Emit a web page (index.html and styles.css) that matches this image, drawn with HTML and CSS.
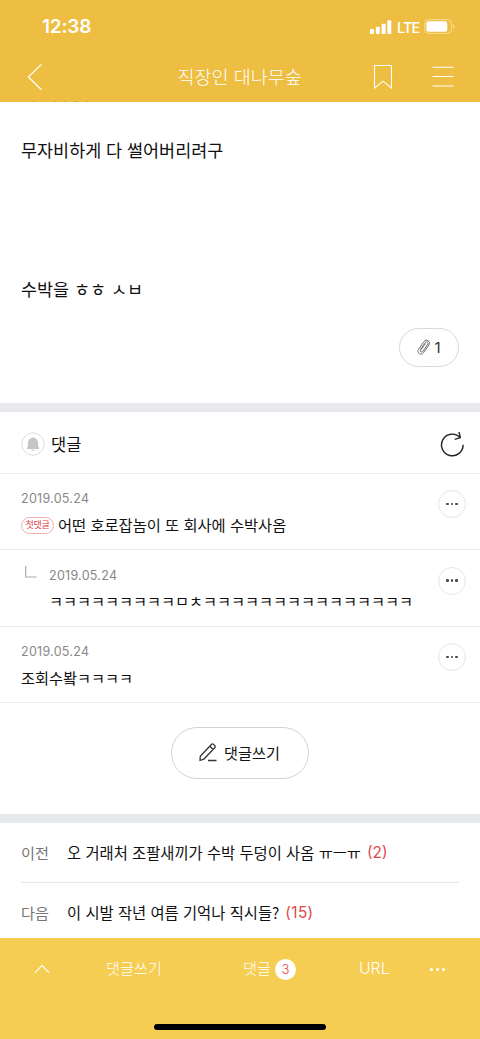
FILE: index.html
```html
<!DOCTYPE html>
<html lang="ko">
<head>
<meta charset="utf-8">
<title>직장인 대나무숲</title>
<link rel="stylesheet" href="styles.css">
</head>
<body>
<div class="app">
  <header class="top">
    <div class="status">
      <span class="clock">12:38</span>
      <div class="signals">
        <svg width="22" height="14" viewBox="0 0 22 14" fill="#fff"><rect x="0" y="9" width="4" height="5" rx="1"/><rect x="5.8" y="6.7" width="4" height="7.3" rx="1"/><rect x="11.6" y="3.8" width="4" height="10.2" rx="1"/><rect x="17.3" y="0.2" width="4" height="13.8" rx="1"/></svg>
        <span class="lte">LTE</span>
        <svg width="31" height="15" viewBox="0 0 31 15"><rect x=".6" y=".6" width="27" height="13.8" rx="4" fill="none" stroke="#f7dc94"/><rect x="2.3" y="2.3" width="21" height="10.4" rx="2.2" fill="#fff"/><path d="M29.2 5.2q1.4.8 1.4 2.3t-1.4 2.3z" fill="#f7dc94"/></svg>
      </div>
    </div>
    <div class="nav">
      <svg class="back" width="16" height="28" viewBox="0 0 16 28" fill="none" stroke="#fff" stroke-width="1.2"><path d="M14.5 1.4 1.3 14l13.2 12.7"/></svg>
      <h1 class="title">직장인 대나무숲</h1>
      <svg class="bookmark" width="20" height="26" viewBox="0 0 20 26" fill="none" stroke="#fff" stroke-width="1.1"><path d="M1.5 1.5h17v22.7L10 17.2l-8.5 7z"/></svg>
      <svg class="menu" width="22" height="22" viewBox="0 0 22 22" stroke="#fff" stroke-width="1.1"><path d="M.5 1.3h21M.5 10.5h21M.5 20h21"/></svg>
    </div>
    <svg class="peek" width="70" height="2" viewBox="0 0 70 2" stroke="#ad9659" stroke-opacity=".6"><path d="M3 1.5h2M24 1.5h2M34 1.5h2M44 1.5h3M56 1.5h2"/></svg>
  </header>

  <main>
    <article class="post">
      <p class="line">무자비하게 다 썰어버리려구</p>
      <p class="line second">수박을 ㅎㅎ ㅅㅂ</p>
      <div class="attach">
        <svg width="14" height="17" viewBox="0 0 14 17" fill="none" stroke="#666" stroke-width=".95" stroke-linecap="round"><path d="M11.9 6 6.5 13.8C4.2 17-.8 13.8 1.5 10.4L7 2.5C9.2-.6 14.2 2.3 12.2 5.5M3.6 10.2 8.4 3.5c1.2-1.5 3.5-.1 2.5 1.6L5.8 12.5c-1 1.3-3 .1-2.2-1.3L8 5.1"/></svg>
        <span>1</span>
      </div>
    </article>

    <section class="comments">
      <div class="head">
        <svg width="24" height="24" viewBox="0 0 24 24"><circle cx="12" cy="12" r="11.2" fill="#fff" stroke="#ddd"/><path d="M12 5.3c.7 0 1 .4 1.1.7 2.7.5 4 2.4 4 4.7v3.3l1 2.1v.9H5.9v-.9l1-2.1v-3.3c0-2.3 1.3-4.2 4-4.7.1-.3.4-.7 1.1-.7zM10.2 17.8h3.6c-.3 1.5-3.3 1.5-3.6 0z" fill="#c5c5c5"/></svg>
        <h2>댓글</h2>
        <svg class="reload" width="25" height="26" viewBox="0 0 25 26" fill="none" stroke="#222" stroke-width="1.4" stroke-linejoin="round"><path d="M23.1 13.7a10.8 10.8 0 1 1-3.2-7.4"/><path d="M18.9 1l1.5 5.7-5.7 1.6"/></svg>
      </div>
      <div class="comment">
        <div class="date">2019.05.24</div>
        <div class="text"><span class="tag">첫댓글</span><span class="first">어떤 호로잡놈이 또 회사에 수박사옴</span></div>
        <button class="more"><i></i><i></i><i></i></button>
      </div>
      <div class="comment reply">
        <svg class="elbow" width="12" height="12" viewBox="0 0 12 12" fill="none" stroke="#aaa" stroke-width="1.2"><path d="M.7 0v11h11"/></svg>
        <div class="date">2019.05.24</div>
        <div class="text jamo">ㅋㅋㅋㅋㅋㅋㅋㅋㅋㅁㅊㅋㅋㅋㅋㅋㅋㅋㅋㅋㅋㅋㅋㅋㅋㅋ</div>
        <button class="more"><i></i><i></i><i></i></button>
      </div>
      <div class="comment">
        <div class="date">2019.05.24</div>
        <div class="text jamo">조회수봨ㅋㅋㅋㅋ</div>
        <button class="more"><i></i><i></i><i></i></button>
      </div>
      <div class="write-area">
        <button class="write">
          <svg width="18" height="19" viewBox="0 0 18 19" fill="none" stroke="#33333a" stroke-width="1.3" stroke-linejoin="round"><path d="M1 17.5 1.3 13.2 12.6 1.3q1-.9 2 .1l1.2 1.3q.8 1-.1 2L4.8 16.2zM10.8 3.2l3.4 3.3M9 17.5h8.5"/></svg>
          <span>댓글쓰기</span>
        </button>
      </div>
    </section>

    <section class="siblings">
      <div class="sibling"><span class="dir">이전</span><span class="subject">오 거래처 조팔새끼가 수박 두덩이 사옴 ㅠㅡㅠ</span><span class="count">(2)</span></div>
      <div class="sibling"><span class="dir">다음</span><span class="subject">이 시발 작년 여름 기억나 직시들?</span><span class="count wide">(15)</span></div>
    </section>
  </main>

  <footer class="bottom">
    <nav class="tools">
      <svg width="16" height="10" viewBox="0 0 16 10" fill="none" stroke="#fff" stroke-width="1.1"><path d="M.8 8.8 8 1.5l7.2 7.3"/></svg>
      <span class="t-write">댓글쓰기</span>
      <span class="t-comments">댓글</span><span class="badge">3</span>
      <span class="t-url">URL</span>
      <span class="dots"><i></i><i></i><i></i></span>
    </nav>
    <div class="home"></div>
  </footer>
</div>
</body>
</html>
```
FILE: styles.css
```css
* { box-sizing: border-box; margin: 0; padding: 0; }
body {
  width: 480px;
  background: #fff;
  color: #111;
  font-family: Inter, "Noto Sans CJK KR", sans-serif;
  white-space: nowrap;
}
svg { display: block; flex: none; }
button { background: none; border: 0; font: inherit; color: inherit; }
.app { display: flex; flex-direction: column; height: 1039px; overflow: hidden; }
main { flex: 1; min-height: 0; overflow: hidden; }

.top { position: relative; height: 102px; background: #edbe42; color: #fff; flex: none; }
.status { display: flex; justify-content: space-between; align-items: center; height: 52px; padding: 1px 25px 0 42px; }
.clock { font-size: 19px; font-weight: 600; letter-spacing: -.2px; }
.signals { display: flex; align-items: center; }
.lte { font-size: 14.5px; font-weight: 500; margin: 1px 4px 0 5px; width: 23px; letter-spacing: -.9px; }
.nav { display: flex; align-items: center; height: 50px; padding: 0 26px 0 27px; }
.title { width: 126px; margin: -2px 0 0 134.5px; font: 300 18.5px/26px "Noto Sans CJK KR", sans-serif; }
.bookmark { margin-left: 69.5px; }
.menu { margin-left: auto; }
.peek { position: absolute; left: 30px; bottom: 0; }

.post { height: 300.5px; padding: 34px 21px 0; }
.line { font: 400 17.45px/28px "Noto Sans CJK KR", sans-serif; }
.second { margin-top: 111px; }
.attach {
  display: flex; align-items: center; justify-content: center; gap: 3px;
  width: 60px; height: 39px; margin: 25px 0 0 auto;
  border: 1px solid #d9d9d9; border-radius: 20px;
  font: 400 15px/22px Inter, sans-serif; color: #333;
}
.comments { border-top: 9px solid #e8e9ed; height: 411.5px; }
.head { display: flex; align-items: center; height: 62px; padding: 4px 15px 0 21px; border-bottom: 1px solid #ebebed; }
.head h2 { font: 400 16.5px/24px "Noto Sans CJK KR", sans-serif; margin-left: 6px; }
.reload { margin-left: auto; }
.comment { position: relative; height: 76.5px; padding: 17.5px 21px 0; border-bottom: 1px solid #ebebed; }
.date { font-size: 12.5px; line-height: 16px; color: #888; letter-spacing: .27px; }
.text { display: flex; align-items: center; height: 24px; margin-top: 4.5px; font: 400 15.3px/24px "Noto Sans CJK KR", sans-serif; }
.jamo { font-size: 15.22px; }
.tag {
  width: 33px; height: 17px; margin: 3px 4px 0 0; border: 1px solid #f2aeb0; border-radius: 9px;
  font-size: 9px; line-height: 14px; text-align: center; letter-spacing: -.3px; color: #e0444b;
}
.reply { padding-left: 49px; }
.elbow { position: absolute; left: 25px; top: 16px; }
.more, .dots { display: flex; align-items: center; justify-content: center; }
.more { position: absolute; right: 14px; top: 16.5px; width: 28px; height: 28px; gap: 2px; border: 1px solid #e6e6e8; border-radius: 50%; }
.more i { width: 2.5px; height: 2.5px; background: #444; border-radius: 50%; }
.write-area { display: flex; justify-content: center; padding-top: 23.5px; }
.write {
  display: flex; align-items: center; justify-content: center; gap: 7px;
  width: 138px; height: 52px; padding-right: 1px; border: 1px solid #d3d3d6; border-radius: 26px;
  font: 400 15.2px/24px "Noto Sans CJK KR", sans-serif;
}
.write span { margin-top: -2px; }
.siblings { border-top: 9px solid #e8e9ed; padding: 0 21px; }
.sibling { display: flex; align-items: center; height: 60px; padding-bottom: 1px; border-bottom: 1px solid #e6e6e8; font: 400 15.35px/24px "Noto Sans CJK KR", sans-serif; }
.dir { width: 46px; color: #777; font-size: 15.2px; }
.count { margin: 1px 0 0 6px; font: 400 15.3px/24px Inter, sans-serif; color: #df484d; }
.wide { letter-spacing: .4px; }

.bottom { height: 101px; background: #f5cd52; flex: none; color: #fff; }
.tools { display: flex; align-items: center; height: 62px; padding-left: 34px; font: 300 15.2px/24px "Noto Sans CJK KR", sans-serif; }
.t-write { margin: -4px 0 0 56px; width: 137px; }
.t-comments { margin-top: -4px; width: 32px; }
.badge { width: 21px; height: 21px; border-radius: 50%; background: #fff; color: #df484d; font: 300 13px/21px Inter, sans-serif; text-align: center; }
.t-url { margin-left: 63px; font: 300 15.8px/24px Inter, sans-serif; width: 71px; }
.dots { gap: 3px; }
.dots i { width: 3px; height: 3px; background: #fff; border-radius: 50%; }
.home { width: 172px; height: 6px; margin: 23.5px auto 0; border-radius: 3px; background: #000; }
```
